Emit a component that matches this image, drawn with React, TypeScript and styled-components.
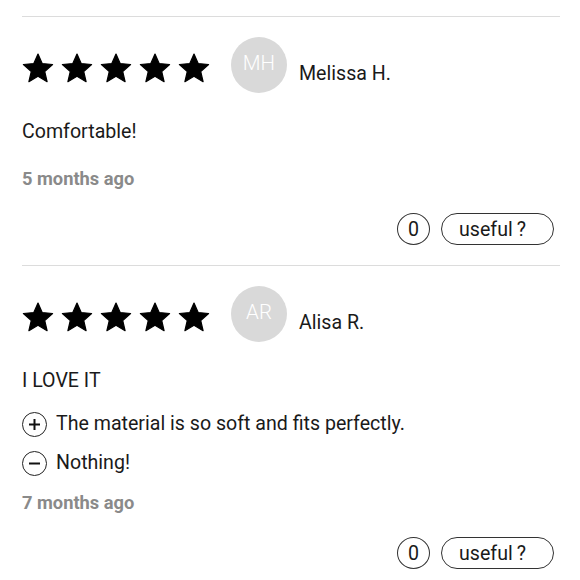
import React from "react";
import styled, { createGlobalStyle } from "styled-components";

const Global = createGlobalStyle`
  html, body { margin: 0; padding: 0; background: #fff; }
  body { font-family: Roboto, "Noto Sans", Arial, sans-serif; color: #1a1a1a; }
`;

const Page = styled.div`
  padding: 16px 20px 0 22px;
`;

const Review = styled.section`
  border-top: 1px solid #dcdcdc;
  padding: 20px 0 20px;
`;

const Header = styled.div`
  display: flex;
  align-items: center;
  height: 56px;
`;

const Stars = styled.div`
  display: flex;
  gap: 7px;
  margin-top: 5px;
`;

const Avatar = styled.div`
  width: 56px;
  height: 56px;
  border-radius: 50%;
  background: #d9d9d9;
  color: #fff;
  display: flex;
  align-items: center;
  justify-content: center;
  font-size: 20.5px;
  font-weight: 300;
  margin-left: 21px;
  padding-bottom: 5px;
  box-sizing: border-box;
`;

const Name = styled.div`
  font-size: 19.6px;
  margin-left: 12px;
  margin-top: 17px;
  color: #1a1a1a;
`;

const Body = styled.p`
  margin: 25px 0 0;
  font-size: 19.6px;
  line-height: 28px;
`;

const Points = styled.ul`
  list-style: none;
  margin: 15px 0 0;
  padding: 0;
  display: flex;
  flex-direction: column;
  gap: 11px;
`;

const Point = styled.li`
  display: flex;
  align-items: center;
  gap: 9px;
  font-size: 19.6px;
  line-height: 28px;
`;

const PointIcon = styled.span`
  width: 23px;
  height: 23px;
  border: 1.3px solid #222;
  border-radius: 50%;
  display: flex;
  align-items: center;
  justify-content: center;
  flex-shrink: 0;
`;

const When = styled.div<{ $gap: number }>`
  margin-top: ${(p) => p.$gap}px;
  font-size: 18.3px;
  line-height: 26px;
  font-weight: 700;
  color: #8a8a8a;
`;

const Actions = styled.div`
  display: flex;
  justify-content: flex-end;
  gap: 11px;
  margin-top: 21px;
  padding-right: 6px;
`;

const Count = styled.div`
  width: 33px;
  height: 32px;
  box-sizing: border-box;
  border: 1px solid #333;
  border-radius: 50%;
  display: flex;
  align-items: center;
  justify-content: center;
  font-size: 19.6px;
`;

const Useful = styled.button`
  width: 113px;
  height: 32px;
  box-sizing: border-box;
  border: 1px solid #333;
  border-radius: 16px;
  background: #fff;
  font-family: inherit;
  font-size: 19.6px;
  color: #1a1a1a;
  padding: 0 10px 0 0;
`;

const Star = () => (
  <svg width="32" height="30" viewBox="0 0 32 30">
    <path
      d="M16 1 L20.2 10.6 L30.6 11.5 L22.7 18.5 L25.1 28.7 L16 23.3 L6.9 28.7 L9.3 18.5 L1.4 11.5 L11.8 10.6 Z"
      fill="#000"
      stroke="#000"
      strokeWidth="1.2"
      strokeLinejoin="round"
    />
  </svg>
);

const PlusMinus = ({ plus }: { plus: boolean }) => (
  <svg width="13" height="13" viewBox="0 0 13 13">
    <path d="M1 6.5 H12" stroke="#111" strokeWidth="2" />
    {plus && <path d="M6.5 1 V12" stroke="#111" strokeWidth="2" />}
  </svg>
);

type Data = {
  initials: string;
  name: string;
  text: string;
  pros?: string;
  cons?: string;
  when: string;
};

const reviews: Data[] = [
  { initials: "MH", name: "Melissa H.", text: "Comfortable!", when: "5 months ago" },
  {
    initials: "AR",
    name: "Alisa R.",
    text: "I LOVE IT",
    pros: "The material is so soft and fits perfectly.",
    cons: "Nothing!",
    when: "7 months ago",
  },
];

export default function App() {
  return (
    <Page>
      <Global />
      {reviews.map((r) => (
        <Review key={r.name}>
          <Header>
            <Stars>
              {[0, 1, 2, 3, 4].map((i) => (
                <Star key={i} />
              ))}
            </Stars>
            <Avatar>{r.initials}</Avatar>
            <Name>{r.name}</Name>
          </Header>
          <Body>{r.text}</Body>
          {r.pros && (
            <Points>
              <Point>
                <PointIcon>
                  <PlusMinus plus />
                </PointIcon>
                {r.pros}
              </Point>
              <Point>
                <PointIcon>
                  <PlusMinus plus={false} />
                </PointIcon>
                {r.cons}
              </Point>
            </Points>
          )}
          <When $gap={r.pros ? 13 : 20}>{r.when}</When>
          <Actions>
            <Count>0</Count>
            <Useful>useful{"\u2009"}?</Useful>
          </Actions>
        </Review>
      ))}
    </Page>
  );
}
